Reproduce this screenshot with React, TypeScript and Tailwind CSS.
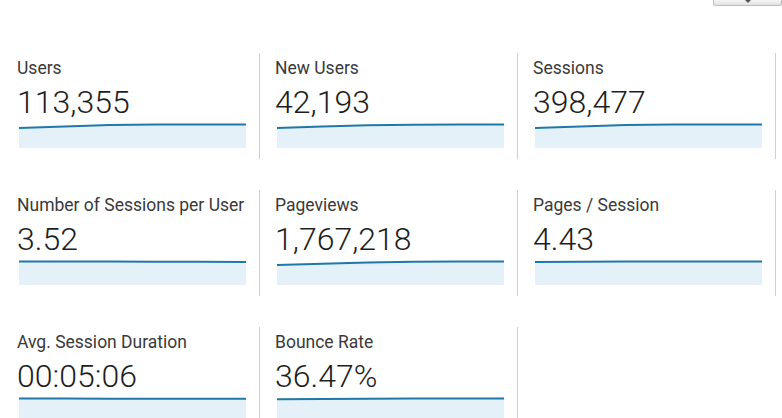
import { FC } from 'react'

interface Metric {
  label: string
  value: string
  // y points of the line, 0 = top of the chart box
  points: number[]
}

const rows: Metric[][] = [
  [
    { label: 'Users', value: '113,355', points: [5, 3.5, 2, 1.5, 1.5, 1.5] },
    { label: 'New Users', value: '42,193', points: [5, 3.5, 2.2, 1.8, 1.6, 1.5] },
    { label: 'Sessions', value: '398,477', points: [5, 3.5, 2, 1.6, 1.5, 1.5] },
  ],
  [
    { label: 'Number of Sessions per User', value: '3.52', points: [1.5, 1.5, 1.6, 1.7, 1.8, 2] },
    { label: 'Pageviews', value: '1,767,218', points: [5, 3.8, 2.5, 1.8, 1.6, 1.5] },
    { label: 'Pages / Session', value: '4.43', points: [2, 1.8, 1.6, 1.6, 1.6, 1.6] },
  ],
  [
    { label: 'Avg. Session Duration', value: '00:05:06', points: [1.5, 1.6, 1.7, 1.8, 1.8, 1.8] },
    { label: 'Bounce Rate', value: '36.47%', points: [2.2, 2, 1.8, 1.6, 1.5, 1.5] },
  ],
]

const W = 227
const H = 25

const Sparkline: FC<{ points: number[] }> = ({ points }) => {
  const step = W / (points.length - 1)
  const line = points.map((y, i) => `${i === 0 ? 'M' : 'L'}${(i * step).toFixed(1)} ${y}`).join(' ')
  const area = `${line} L${W} ${H} L0 ${H} Z`
  return (
    <svg width={W} height={H} className="block ml-[2px] mt-[3px]">
      <path d={area} fill="#e4f1f9" />
      <path d={line} fill="none" stroke="#1f78a8" strokeWidth={2} />
    </svg>
  )
}

const MetricCell: FC<{ metric: Metric }> = ({ metric }) => (
  <div className="h-[106px] border-r border-[#cfcfcf] pl-[15px] pt-[5px]">
    <div className="text-[17.5px] leading-[20px] text-[#3a3a3a] whitespace-nowrap">{metric.label}</div>
    <div className="mt-[6px] text-[32px] leading-[36px] font-light text-[#1e1e1e]">{metric.value}</div>
    <Sparkline points={metric.points} />
  </div>
)

const App: FC = () => {
  return (
    <div className="w-[782px] h-[418px] overflow-hidden bg-white font-['Roboto',sans-serif]">
      <div className="flex justify-end">
        <div className="flex h-[6px] w-[69px] items-start justify-center rounded-b-[3px] border border-t-0 border-[#bdbdbd] bg-gradient-to-b from-[#f5f5f5] to-[#e2e2e2]">
          <div className="h-0 w-0 border-x-[3px] border-t-[3px] border-x-transparent border-t-[#555]" />
        </div>
      </div>
      <div className="mt-[47px] flex flex-col gap-[31px] pl-[2px]">
        {rows.map((row, r) => (
          <div key={r} className="grid grid-cols-[258px_258px_258px]">
            {row.map((m) => (
              <MetricCell key={m.label} metric={m} />
            ))}
          </div>
        ))}
      </div>
    </div>
  )
}

export default App
